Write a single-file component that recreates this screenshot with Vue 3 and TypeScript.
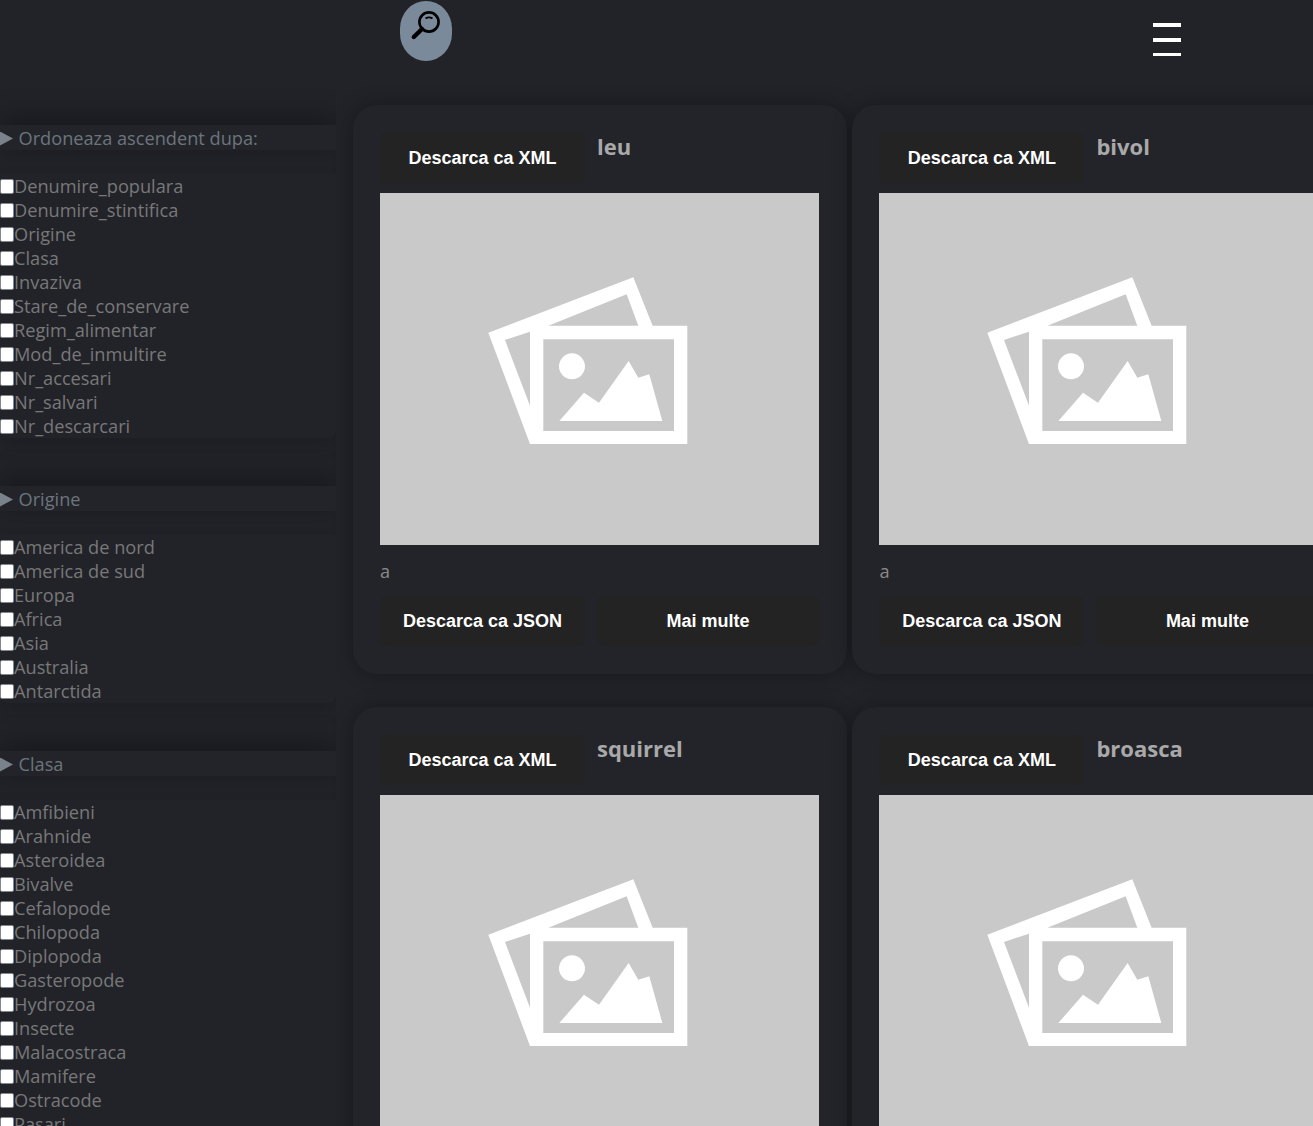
<script setup lang="ts">
interface Section { title: string; items: string[] }
interface Animal { name: string }

const sections: Section[] = [
  {
    title: 'Ordoneaza ascendent dupa:',
    items: ['Denumire_populara', 'Denumire_stintifica', 'Origine', 'Clasa', 'Invaziva', 'Stare_de_conservare', 'Regim_alimentar', 'Mod_de_inmultire', 'Nr_accesari', 'Nr_salvari', 'Nr_descarcari'],
  },
  {
    title: 'Origine',
    items: ['America de nord', 'America de sud', 'Europa', 'Africa', 'Asia', 'Australia', 'Antarctida'],
  },
  {
    title: 'Clasa',
    items: ['Amfibieni', 'Arahnide', 'Asteroidea', 'Bivalve', 'Cefalopode', 'Chilopoda', 'Diplopoda', 'Gasteropode', 'Hydrozoa', 'Insecte', 'Malacostraca', 'Mamifere', 'Ostracode', 'Pasari'],
  },
]

const animals: Animal[] = [
  { name: 'leu' },
  { name: 'bivol' },
  { name: 'squirrel' },
  { name: 'broasca' },
]
</script>

<template>
  <div class="page">
    <header class="topbar">
      <button class="search" type="button" aria-label="Cauta">
        <svg viewBox="0 0 34 34" width="34" height="34" fill="none" stroke="#000">
          <circle cx="20" cy="13" r="9.6" stroke-width="2.6" />
          <path d="M13 20 L4.8 28" stroke-width="4.4" stroke-linecap="round" />
          <path d="M16.5 9.6 C18.5 8.2 21.5 8.2 23.5 9.6" stroke-width="1.8" />
        </svg>
      </button>
      <div class="burger"><span class="l1"></span><span class="l2"></span><span class="l3"></span></div>
    </header>

    <div class="body">
      <aside class="sidebar">
        <section v-for="s in sections" :key="s.title" class="group">
          <h3 class="group-title"><span class="arrow"></span>{{ s.title }}</h3>
          <div class="group-list">
            <label v-for="item in s.items" :key="item" class="option">
              <input type="checkbox" /><span>{{ item }}</span>
            </label>
          </div>
        </section>
      </aside>

      <main class="cards">
        <article v-for="a in animals" :key="a.name" class="card">
          <div class="card-top">
            <button class="btn btn-xml" type="button">Descarca ca XML</button>
            <h2 class="name">{{ a.name }}</h2>
          </div>
          <div class="photo">
            <svg viewBox="0 0 439 352" width="439" height="352">
              <g transform="translate(90 67) scale(0.3333)" fill="#fff" fill-rule="evenodd">
                <path d="M55 218 L490 52 L548 197 L652 197 L652 552 L180 552 Z M105 240 L180 215 L180 437 Z M235 197 L470 103 L505 197 Z M220 238 L612 238 L612 513 L220 513 Z" />
                <circle cx="306" cy="319" r="39" />
                <path d="M268 483 L342 398 L387 428 L476 303 L505 353 L538 343 L577 483 Z" />
              </g>
            </svg>
          </div>
          <p class="desc">a</p>
          <div class="actions">
            <button class="btn btn-json" type="button">Descarca ca JSON</button>
            <button class="btn btn-more" type="button">Mai multe</button>
          </div>
        </article>
      </main>
    </div>
  </div>
</template>

<style>
html, body {
  margin: 0;
  height: 100%;
  overflow: hidden;
  background: #222329;
}
</style>

<style scoped>
.page {
  height: 1126px;
  overflow: hidden;
  background: #222329;
  font-family: "Open Sans", sans-serif;
  font-size: 18.2px;
  line-height: 24px;
  color: #787878;
}
.topbar {
  height: 70px;
  display: flex;
  align-items: flex-start;
}
.search {
  margin: 1px 0 0 400px;
  width: 52px;
  height: 60px;
  padding: 0 0 10px;
  border: 0;
  border-radius: 50% / 46%;
  background: #7a8a9a;
  display: flex;
  align-items: center;
  justify-content: center;
}
.burger {
  margin: 23px 0 0 701px;
  width: 28px;
  display: flex;
  flex-direction: column;
}
.burger span { display: block; background: #fff; }
.l1 { height: 4px; }
.l2 { height: 4px; margin-top: 11px; }
.l3 { height: 3px; margin-top: 11px; }

.body {
  display: flex;
  align-items: flex-start;
}
.sidebar {
  flex: 0 0 336px;
  width: 336px;
  height: 1056px;
  padding-top: 55px;
  box-sizing: border-box;
  overflow: hidden;
}
.group { margin-bottom: 48px; }
.group-title {
  position: relative;
  display: flex;
  align-items: center;
  margin: 0 0 24px;
  height: 25px;
  font-size: 18.2px;
  font-weight: 400;
  color: #6c757d;
  background: #232429;
  box-shadow: 0 -6px 28px rgba(0, 0, 0, 0.38);
}
.arrow {
  flex: none;
  width: 13px;
  height: 14px;
  margin: 2px 5.5px 0 0;
  background: #7a838b;
  clip-path: polygon(0 0, 100% 50%, 0 100%);
}
.group-list {
  position: relative;
  background: #222329;
  border-radius: 0 0 8px 8px;
  box-shadow: 0 8px 18px rgba(0, 0, 0, 0.14);
}
.option {
  display: flex;
  align-items: center;
  height: 24px;
}
.option input {
  appearance: none;
  -webkit-appearance: none;
  box-sizing: border-box;
  margin: 1px 0 0;
  width: 14px;
  height: 15px;
  flex: none;
  background: #fff;
  border: 1.5px solid #85878f;
  border-radius: 2px;
}

.cards {
  flex: none;
  width: 1100px;
  padding: 35px 0 0 17px;
  display: flex;
  flex-wrap: wrap;
  align-content: flex-start;
  column-gap: 5px;
  row-gap: 33px;
  box-sizing: border-box;
}
.card {
  width: 494.4px;
  height: 569px;
  box-sizing: border-box;
  padding: 0 27px;
  border-radius: 24px;
  background: #232429;
  box-shadow: 0 0 20px rgba(0, 0, 0, 0.32);
}
.card-top {
  display: flex;
  align-items: flex-start;
  height: 88px;
}
.name {
  margin: 25px 0 0 12px;
  font-size: 22px;
  line-height: 32px;
  font-weight: 700;
  color: #a9a9a9;
}
.photo {
  height: 352px;
  width: 439px;
  background: #c9c9c9;
}
.photo svg { display: block; }
.desc {
  margin: 14px 0 0;
  height: 24px;
  color: #8a8a8a;
}
.actions {
  display: flex;
  gap: 12px;
  margin-top: 13px;
}
.btn {
  height: 50px;
  border: 0;
  padding: 0;
  border-radius: 6px;
  background: #232323;
  color: #fff;
  font-family: "Liberation Sans", Arial, sans-serif;
  font-size: 18px;
  font-weight: 700;
  text-align: center;
}
.btn-xml {
  flex: none;
  width: 205px;
  margin-top: 28px;
}
.btn-json { flex: none; width: 205px; }
.btn-more { flex: 0 0 222px; }
</style>
